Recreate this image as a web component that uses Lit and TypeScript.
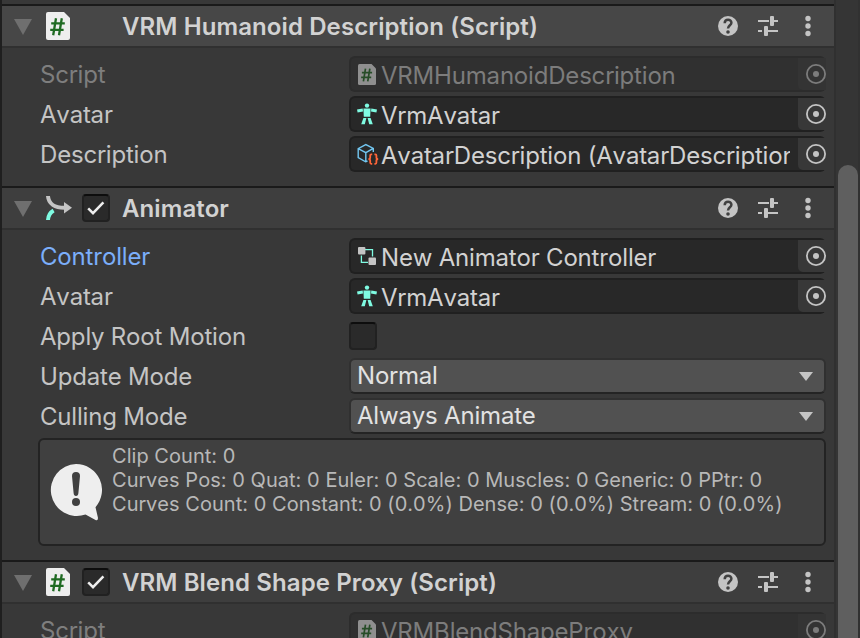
import { LitElement, html, css, svg, nothing } from "lit";
import { customElement, property } from "lit/decorators.js";

const sheet = css`
  svg { display: block; flex: none; }
`;

const scriptIcon = (w: number, h: number) => html`<svg width=${w} height=${h} viewBox="0 0 24 28">
  <path d="M2 0H18L24 6V26Q24 28 22 28H2Q0 28 0 26V2Q0 0 2 0Z" fill="#eeeeee" />
  <path d="M10 6.2L7.2 23.2M15.8 6.2L13 23.2M5.2 11.4H18.8M4.2 17.8H17.6" stroke="#1f6a22" stroke-width="2.3" fill="none" />
</svg>`;

const animatorIcon = html`<svg width="28" height="28" viewBox="0 0 28 28">
  <path d="M2 2C2.5 10 9 13.8 18.5 13.8" stroke="#c4c4c4" stroke-width="4" fill="none" />
  <path d="M18 8L26 13.8L18 19.6Z" fill="#c4c4c4" />
  <path d="M2 26C2.2 21.5 4 18.5 7.6 16.4" stroke="#7ffbe2" stroke-width="4" fill="none" />
</svg>`;

const avatarIcon = html`<svg width="20" height="22" viewBox="0 0 20 22" fill="#7ffbe2">
  <circle cx="10" cy="2.6" r="2.2" />
  <path d="M6.4 5.4H13.6L13.2 13.8H6.8Z" />
  <path d="M5.7 5.4L6 8.4L0.6 9.4L0 6.6ZM14.3 5.4L14 8.4L19.4 9.4L20 6.6Z" />
  <path d="M6.4 15H9.4L7.8 21.2H4.2ZM10.6 15H13.6L15.8 21.2H12.2Z" />
</svg>`;

const objectIcon = html`<svg width="24" height="22" viewBox="-2 0 24 22" fill="none">
  <path d="M10.5 18L8.6 18.8L1.2 14.6V5.6L8.8 1.6L16.3 5.4V9M1.2 5.6L8.8 9.6L16.3 5.4M8.8 9.6V18.6" stroke="#72c6f0" stroke-width="1.4" />
  <path d="M15.2 11.4H14.2Q13.2 11.4 13.2 12.6V14.6Q13.2 16.1 11.4 16.1Q13.2 16.1 13.2 17.6V19.6Q13.2 20.8 14.2 20.8H15.2M17.4 11.4H18.4Q19.4 11.4 19.4 12.6V14.6Q19.4 16.1 21.2 16.1Q19.4 16.1 19.4 17.6V19.6Q19.4 20.8 18.4 20.8H17.4" stroke="#ff6538" stroke-width="1.8" />
</svg>`;

const controllerIcon = html`<svg width="20" height="20" viewBox="0 0 20 20">
  <path d="M8 3.7H15.5V10.5M4.4 9.5V16.3H11" stroke="#7ffbe2" stroke-width="1.3" fill="none" />
  <rect x="1" y="1" width="7.4" height="7.6" rx="1" fill="#c4c4c4" />
  <rect x="11.5" y="11.4" width="7.5" height="7.6" rx="1" fill="#c4c4c4" />
</svg>`;

const check = html`<svg width="24" height="24" viewBox="0 0 24 24">
  <path d="M4.2 12.4L9 17.2L19.4 6.4" stroke="#eeeeee" stroke-width="2.5" fill="none" />
</svg>`;

const fieldIcons: Record<string, unknown> = {
  script: scriptIcon(18, 21),
  avatar: avatarIcon,
  object: objectIcon,
  controller: controllerIcon,
};

@customElement("component-header")
class ComponentHeader extends LitElement {
  @property() title = "";
  @property() kind = "script";
  @property({ type: Boolean }) toggle = false;
  @property({ type: Boolean }) hovered = false;

  static styles = [sheet, css`
    :host { display: block; }
    .bar { display: flex; align-items: center; height: 40px; border-top: 2px solid #1a1a1a; border-bottom: 2px solid #303030; background: #3e3e3e; }
    .hovered { background: #474747; }
    .fold { margin-left: 12px; width: 18px; margin-top: 1px; }
    .kind { width: 28px; margin-left: 14px; margin-right: 8px; }
    .slot { width: 28px; margin-right: 12px; }
    .box { box-sizing: border-box; width: 28px; height: 28px; border: 2px solid #212121; border-top-color: #0d0d0d; border-radius: 4px; background: #2a2a2a; }
    .title { flex: 1; font-weight: 600; font-size: 24px; line-height: 40px; padding-top: 2px; height: 40px; color: #d2d2d2; letter-spacing: var(--track-bold); white-space: nowrap; }
    .tools { margin-right: 14px; }
  `];

  render() {
    return html`<div class="bar ${this.hovered ? "hovered" : ""}">
      <svg class="fold" width="18" height="16" viewBox="0 0 18 16"><path d="M0 0H18L9 16Z" fill="#6f6f6f" /></svg>
      <div class="kind">${this.kind === "script" ? scriptIcon(24, 28) : animatorIcon}</div>
      <div class="slot">${this.toggle ? html`<div class="box">${check}</div>` : nothing}</div>
      <div class="title">${this.title}</div>
      <svg class="tools" width="102" height="24" viewBox="0 0 102 24">
        <circle cx="10" cy="12" r="10" fill="#c4c4c4" />
        <path d="M6.7 9.3C6.7 4.6 13.4 4.8 13.4 8.8C13.4 11.3 10 11.4 10 14.6" fill="none" stroke="#404040" stroke-width="2.5" />
        <circle cx="10" cy="18" r="1.8" fill="#404040" />
        <path d="M40 7H51M56 7H60M40 17H44M50 17H60" stroke="#c4c4c4" stroke-width="2" />
        <rect x="52" y="2" width="4" height="10" rx="1" fill="#c4c4c4" /><rect x="46" y="12" width="4" height="10" rx="1" fill="#c4c4c4" />
        ${[4.5, 12, 19.5].map((y) => svg`<circle cx="90" cy=${y} r="2.7" fill="#c4c4c4" />`)}
      </svg>
    </div>`;
  }
}

@customElement("property-row")
class PropertyRow extends LitElement {
  @property() label = "";
  @property() value = "";
  @property() kind = "object";
  @property({ type: Boolean }) disabled = false;
  @property({ type: Boolean }) active = false;

  static styles = [sheet, css`
    :host { display: block; }
    .row { display: flex; align-items: center; height: 36px; margin-bottom: 4px; font-size: 24px; font-kerning: none; }
    .label { box-sizing: border-box; width: 309px; height: 36px; padding-top: 1px; margin-left: 38px; line-height: 36px; color: #c4c4c4; letter-spacing: var(--track); white-space: nowrap; }
    .disabled .label { color: #7e7e7e; }
    .active .label { color: #7baefa; }
    .field { box-sizing: border-box; display: flex; width: 477px; height: 36px; border: 2px solid #202020; border-right: 0; border-radius: 6px; background: #282828; }
    .content { display: flex; flex: 1; min-width: 0; margin-right: 8px; align-items: center; overflow: hidden; }
    .icon { display: flex; width: 24px; height: 32px; margin: 0 2px 0 4px; align-items: center; justify-content: center; flex: none; }
    .text { line-height: 34px; padding-top: 1px; height: 31px; color: #d2d2d2; letter-spacing: var(--track); white-space: nowrap; }
    .picker { display: flex; width: 28px; height: 32px; align-items: center; justify-content: flex-end; border-bottom-left-radius: 5px; background: #383838; }
    .picker svg { margin-bottom: 1px; }
    .disabled .field { border-color: #2c2c2c; background: #303030; border-right: 2px solid #2f2f2f; }
    .disabled .picker { background: #343434; margin-right: -2px; }
    .disabled svg { opacity: 0.5; }
    .disabled .text { color: #7c7c7c; }
    .box { box-sizing: border-box; width: 28px; height: 28px; border: 2px solid #212121; border-top-color: #0d0d0d; border-radius: 4px; background: #2a2a2a; }
    .drop { box-sizing: border-box; display: flex; align-items: center; width: 477px; height: 36px; border: 2px solid #303030; border-bottom-color: #242424; border-radius: 6px; background: #515151; padding: 0 11px 0 6px; }
    .choice { flex: 1; line-height: 32px; color: #e2e2e2; letter-spacing: var(--track); }
  `];

  control() {
    if (this.kind === "toggle") return html`<div class="box"></div>`;
    if (this.kind === "enum")
      return html`<div class="drop"><span class="choice">${this.value}</span>
        <svg width="14" height="9" viewBox="0 0 14 9"><path d="M0 0H14L7 9Z" fill="#c4c4c4" /></svg></div>`;
    return html`<div class="field">
      <div class="content"><div class="icon">${fieldIcons[this.kind]}</div><span class="text">${this.value}</span></div>
      <div class="picker"><svg width="20" height="20" viewBox="0 0 20 20"><circle cx="10" cy="10" r="9.1" fill="none" stroke="#c4c4c4" stroke-width="1.8" /><circle cx="10" cy="10" r="3" fill="#c4c4c4" /></svg></div>
    </div>`;
  }

  render() {
    return html`<div class="row ${this.disabled ? "disabled" : ""} ${this.active ? "active" : ""}">
      <div class="label">${this.label}</div>${this.control()}
    </div>`;
  }
}

@customElement("app-root")
class AppRoot extends LitElement {
  static styles = [sheet, css`
    :host { display: block; height: 638px; overflow: hidden; font-family: Inter, "Liberation Sans", sans-serif; --track: -0.19px; --track-bold: 0.1px; background: #383838; }
    .window { display: flex; height: 638px; }
    .inspector { box-sizing: border-box; width: 834px; height: 638px; overflow: hidden; border-left: 2px solid #1f1f1f; padding-top: 4px; }
    .rows { padding-top: 8px; }
    .first { height: 130px; }
    .second { height: 322px; }
    .help { box-sizing: border-box; display: flex; align-items: center; width: 788px; height: 108px; margin-left: 36px; border: 2px solid #232323; border-radius: 6px; background: #404040; }
    .bubble { margin-left: 10px; margin-top: 1px; }
    .stats { align-self: flex-start; margin-left: 10px; padding-top: 4px; font-size: 20px; line-height: 24px; letter-spacing: 0.04px; font-kerning: none; color: #b8b8b8; white-space: pre; }
    .scroll { box-sizing: border-box; width: 26px; height: 638px; border-left: 2px solid #303030; border-right: 2px solid #313131; background: #353535; padding: 165px 0 0 2px; }
    .thumb { width: 20px; height: 500px; border-radius: 10px; background: #5f5f5f; }
  `];

  render() {
    return html`<div class="window">
      <main class="inspector">
        <component-header title="VRM Humanoid Description (Script)" hovered></component-header>
        <div class="rows first">
          <property-row label="Script" kind="script" value="VRMHumanoidDescription" disabled></property-row>
          <property-row label="Avatar" kind="avatar" value="VrmAvatar"></property-row>
          <property-row label="Description" kind="object" value="AvatarDescription (AvatarDescription)"></property-row>
        </div>
        <component-header title="Animator" kind="animator" toggle></component-header>
        <div class="rows second">
          <property-row label="Controller" kind="controller" value="New Animator Controller" active></property-row>
          <property-row label="Avatar" kind="avatar" value="VrmAvatar"></property-row>
          <property-row label="Apply Root Motion" kind="toggle"></property-row>
          <property-row label="Update Mode" kind="enum" value="Normal"></property-row>
          <property-row label="Culling Mode" kind="enum" value="Always Animate"></property-row>
          <div class="help">
            <svg class="bubble" width="52" height="58" viewBox="0 0 52 58">
              <path d="M26 0A26 26 0 0 1 45.5 43.2L48 54Q48 57 45.5 56L35.5 50.5A26 26 0 1 1 26 0Z" fill="#eeeeee" />
              <path d="M22 12Q22 8 26 8Q30 8 30 12L28.4 29Q28.2 32 26 32Q23.8 32 23.6 29Z" fill="#404040" />
              <circle cx="26" cy="38" r="4" fill="#404040" />
            </svg>
            <div class="stats">Clip Count: 0
Curves Pos: 0 Quat: 0 Euler: 0 Scale: 0 Muscles: 0 Generic: 0 PPtr: 0
Curves Count: 0 Constant: 0 (0.0%) Dense: 0 (0.0%) Stream: 0 (0.0%)</div>
          </div>
        </div>
        <component-header title="VRM Blend Shape Proxy (Script)" toggle></component-header>
        <div class="rows">
          <property-row label="Script" kind="script" value="VRMBlendShapeProxy" disabled></property-row>
        </div>
      </main>
      <aside class="scroll"><div class="thumb"></div></aside>
    </div>`;
  }
}
